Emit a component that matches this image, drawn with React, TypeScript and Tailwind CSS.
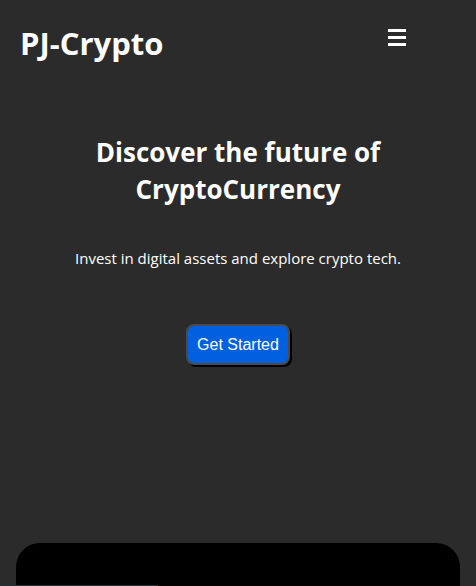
export default function App() {
  return (
    <div
      className="min-h-[586px] bg-[#2b2b2b] text-white overflow-hidden"
      style={{ fontFamily: '"Open Sans", "Noto Sans", sans-serif' }}
    >
      <header className="flex items-center justify-between pl-[20px] pr-[70px] pt-[20px] h-[66px]">
        <h1 className="text-[31px] font-bold leading-none">PJ-Crypto</h1>
        <button className="flex flex-col gap-[4px] w-[18px] mt-[-12px]" aria-label="menu">
          <span className="block h-[3px] bg-white" />
          <span className="block h-[3px] bg-white" />
          <span className="block h-[3px] bg-white" />
        </button>
      </header>

      <section className="flex flex-col items-center text-center px-8 pt-[68px]">
        <h2 className="text-[26px] font-bold leading-[37px] max-w-[320px]">
          Discover the future of CryptoCurrency
        </h2>
        <p className="mt-[40px] text-[15px] leading-5">
          Invest in digital assets and explore crypto tech.
        </p>
        <button
          className="mt-[56px] h-[41px] px-[9px] rounded-lg bg-[#0060df] border-2 border-[#4a4a4a] shadow-[2px_2px_0_#000] text-base"
          style={{ fontFamily: '"Liberation Sans", Arial, sans-serif' }}
        >
          Get Started
        </button>
      </section>

      <div className="relative mt-[178px] mx-4 h-[60px] bg-black rounded-t-3xl">
        <div className="absolute left-[-16px] top-[42px] w-[158px] h-px bg-[#0b3b38]" />
      </div>
    </div>
  );
}
